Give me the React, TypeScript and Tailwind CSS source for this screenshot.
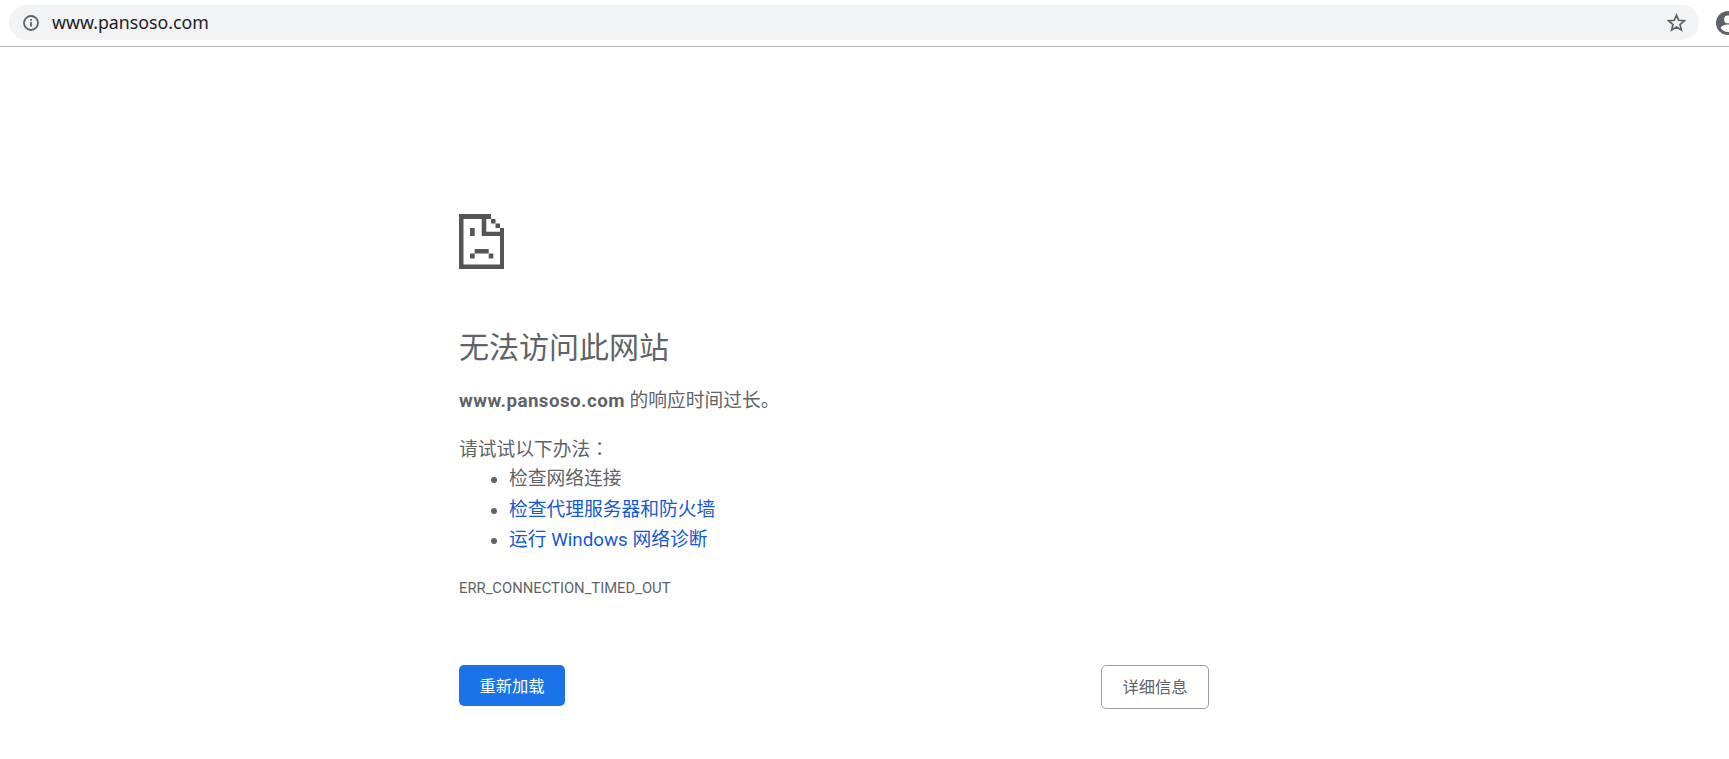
const cjk = "font-['Roboto','Noto_Sans_CJK_SC',sans-serif]";

function SadPage() {
  // pixel-art tab icon, coordinates read off the screenshot
  return (
    <svg width="45" height="55" viewBox="0 0 45 55" fill="#555555">
      <path d="M0 0h32v5h-27.500v45.500h36.500v-36.500h4v41h-45z" />
      <path d="M22.700 5h4.600v12.700h13.700v4.300h-18.300z" />
      <rect x="32" y="5" width="4.500" height="4.500" />
      <rect x="36.500" y="9.500" width="4.500" height="4.500" />
      <rect x="11" y="14" width="4.700" height="8" />
      <rect x="15.700" y="35" width="14" height="4.500" />
      <rect x="11" y="39.500" width="4.700" height="5" />
      <rect x="29.700" y="39.500" width="4.600" height="5" />
    </svg>
  );
}

function InfoIcon() {
  return (
    <svg width="16" height="16" viewBox="0 0 16 16" fill="none">
      <circle cx="8" cy="8" r="7" stroke="#5f6368" strokeWidth="1.800" />
      <rect x="7.100" y="7" width="1.800" height="4.600" fill="#5f6368" />
      <rect x="7.100" y="4" width="1.800" height="1.800" fill="#5f6368" />
    </svg>
  );
}

function StarIcon() {
  return (
    <svg width="19" height="19" viewBox="0 0 20 20" fill="none">
      <path
        d="M10 2.200l2.300 5.500 5.900.5-4.500 3.900 1.400 5.800-5.100-3.100-5.100 3.100 1.400-5.800-4.500-3.900 5.900-.5z"
        stroke="#5f6368"
        strokeWidth="1.800"
        strokeLinejoin="miter"
      />
    </svg>
  );
}

function Avatar() {
  return (
    <svg width="24" height="24" viewBox="0 0 24 24" fill="#5f6368">
      <path d="M12 0a12 12 0 1 0 0 24 12 12 0 0 0 0-24zm0 4.500a3.900 3.900 0 1 1 0 7.800 3.900 3.900 0 0 1 0-7.800zm0 16.500a9 9 0 0 1-7.200-3.700c0-2.400 4.800-3.700 7.200-3.700s7.200 1.300 7.200 3.700a9 9 0 0 1-7.200 3.700z" />
    </svg>
  );
}

export default function App() {
  return (
    <div className={`h-[759px] w-[1729px] overflow-hidden bg-white ${cjk}`}>
      <div className="flex h-[47px] items-start overflow-hidden border-b border-[#b4b4b4] pt-[5px]">
        <div className="ml-[9px] flex h-[35px] w-[1690px] shrink-0 items-center rounded-full bg-[#f1f3f4] pl-[14px] pr-[13px]">
          <InfoIcon />
          <span className="ml-[13px] font-['Noto_Sans',sans-serif] text-[17.75px] text-[#202124]">www.pansoso.com</span>
          <span className="ml-auto flex">
            <StarIcon />
          </span>
        </div>
        <div className="ml-[17px] mt-[6px] shrink-0">
          <Avatar />
        </div>
      </div>

      <main className="ml-[459px] w-[750px] pt-[167px] text-[18.75px] leading-[30.5px] text-[#5f6368]">
        <SadPage />
        <h1 className="mt-[60px] text-[30px] leading-[1.25] text-[#5f6368]">无法访问此网站</h1>
        <p className="mt-[19px]">
          <strong className="font-bold tracking-[0.45px]">www.pansoso.com</strong> 的响应时间过长。
        </p>
        <p className="mt-[18px] leading-[28px]">
          请试试以下办法<span className="font-['Noto_Sans_CJK_TC',sans-serif]">：</span>
        </p>
        <ul className="ml-[34px] list-disc pl-[16px] marker:text-[#5f6368]">
          <li>检查网络连接</li>
          <li className="text-[#1558d6]">检查代理服务器和防火墙</li>
          <li className="text-[#1558d6]">运行 Windows 网络诊断</li>
        </ul>
        <div className="mt-[21px] text-[14.8px] leading-[1.55]">ERR_CONNECTION_TIMED_OUT</div>
        <div className="mt-[66px] flex items-start justify-between">
          <button className="h-[41px] w-[106px] rounded-[5px] bg-[#1a73e8] pt-[2px] text-[16.25px] text-white">重新加载</button>
          <button className="h-[44px] w-[108px] rounded-[5px] border border-[#9aa0a6] bg-white pt-[2px] text-[16.25px] text-[#5f6368]">详细信息</button>
        </div>
      </main>
    </div>
  );
}
